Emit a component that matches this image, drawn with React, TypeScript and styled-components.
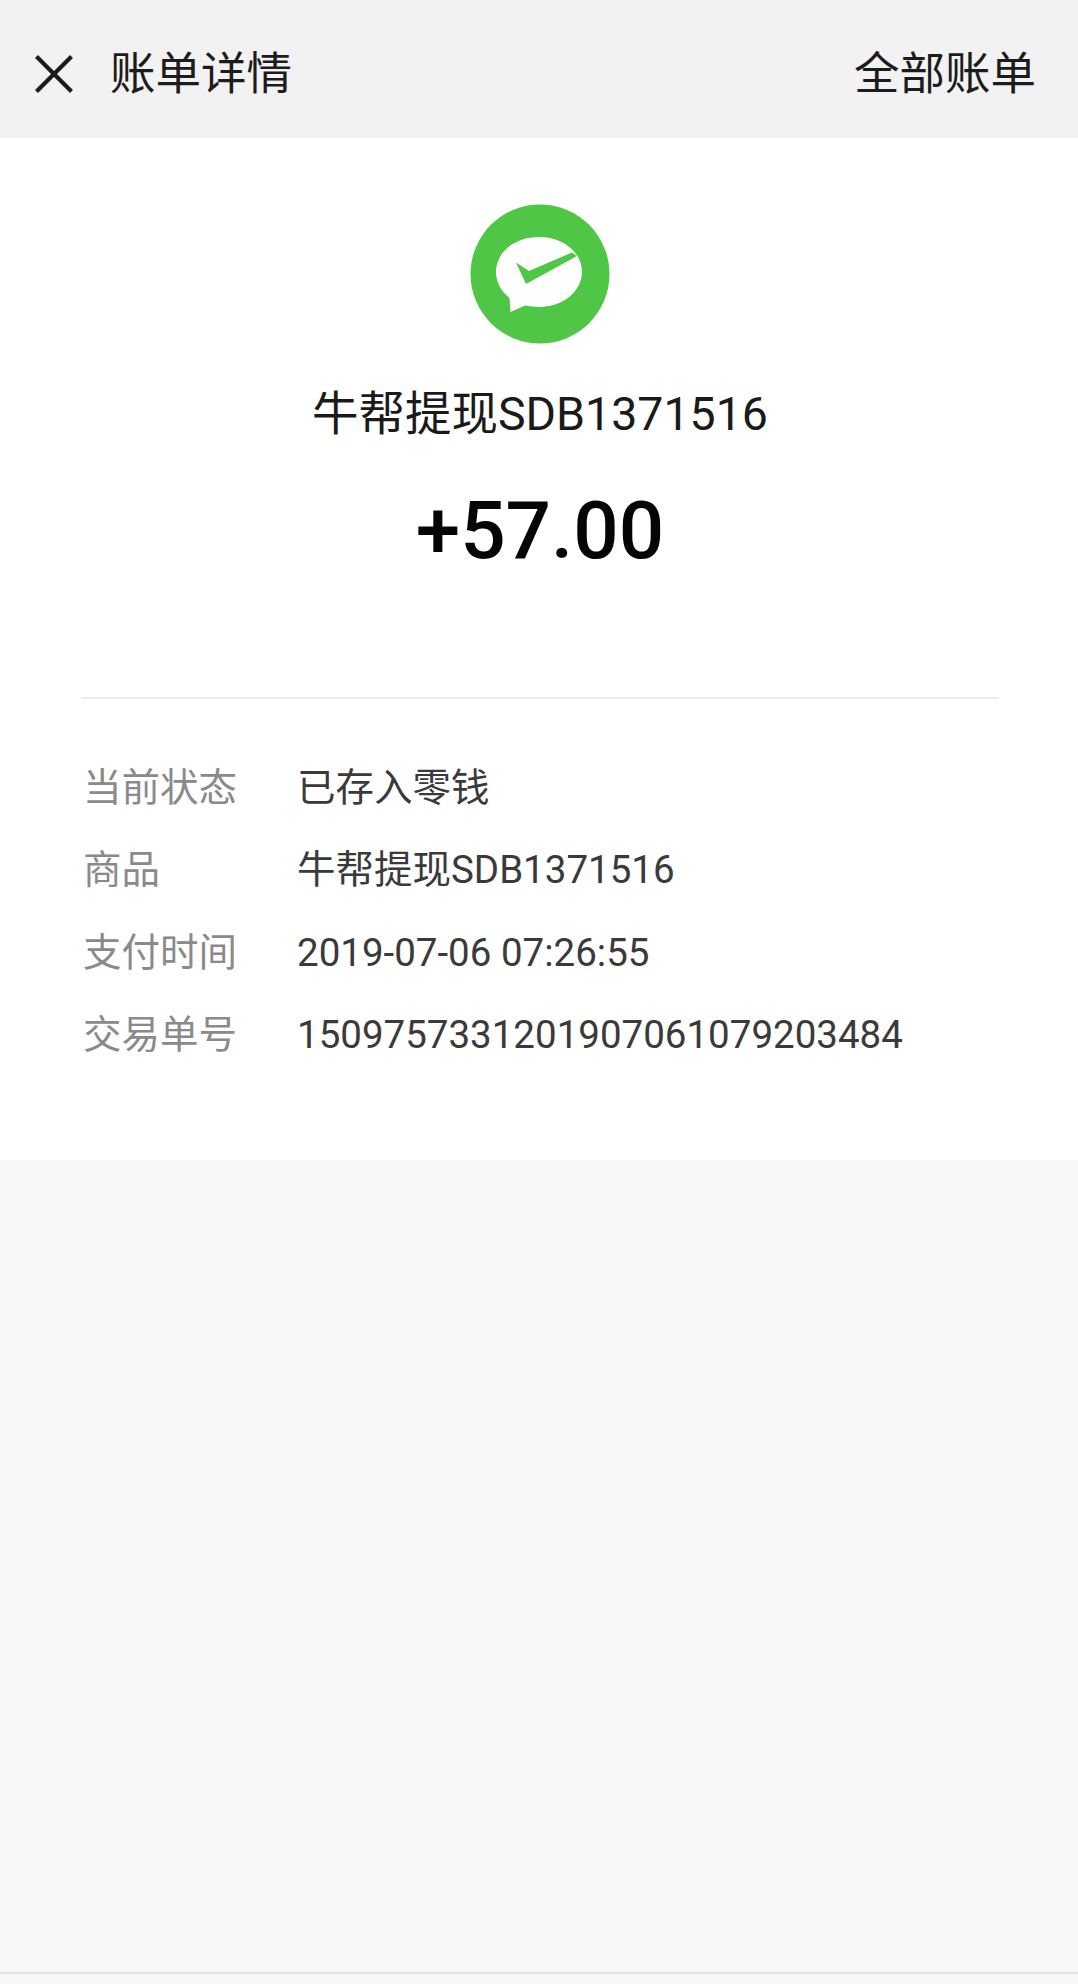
import React from "react";
import styled, { createGlobalStyle } from "styled-components";

const GlobalStyle = createGlobalStyle`
  html, body {
    margin: 0;
    padding: 0;
    background: #f8f8f9;
  }
  body {
    font-family: Roboto, "Noto Sans CJK SC", sans-serif;
  }
`;

//  styled-components
// ----------------------------------------------
const Page = styled.div`
  display: flex;
  flex-direction: column;
  height: 1984px;
  overflow: hidden;
  background: #f8f8f9;
`;
const Header = styled.header`
  display: flex;
  align-items: center;
  justify-content: space-between;
  box-sizing: border-box;
  height: 138px;
  padding: 12px 42px 0 35px;
  background: #f2f2f2;
`;
const HeaderLeft = styled.div`
  display: flex;
  align-items: center;
  gap: 37px;
`;
const CloseBox = styled.svg`
  display: block;
  width: 38px;
  height: 38px;
  margin-top: -2px;
`;
const HeaderText = styled.span`
  font-size: 45.5px;
  line-height: 60px;
  color: #1c1c1c;
`;
const Panel = styled.section`
  box-sizing: border-box;
  height: 1022px;
  padding-top: 66px;
  background: #fff;
`;
const Summary = styled.div`
  display: flex;
  flex-direction: column;
  align-items: center;
  margin: 0 80px 0 82px;
  height: 493px;
  border-bottom: 2px solid #ececec;
`;
const Logo = styled.svg`
  display: block;
  width: 140px;
  height: 140px;
`;
const Title = styled.div`
  margin-top: 40px;
  font-size: 46.5px;
  line-height: 60px;
  color: #1a1a1a;
`;
const Amount = styled.div`
  margin-top: 39px;
  font-size: 80px;
  line-height: 96px;
  font-weight: 500;
  color: #050505;
`;
const Details = styled.div`
  display: flex;
  flex-direction: column;
  gap: 22.3px;
  padding: 59px 0 0 83px;
`;
const Row = styled.div`
  display: flex;
  font-size: 38.5px;
  line-height: 60px;
`;
const Label = styled.span`
  width: 214px;
  flex-shrink: 0;
  color: #8a8a8a;
`;
const Value = styled.span`
  color: #3a3a3a;
`;
const BottomLine = styled.div`
  margin-top: 812px;
  height: 2px;
  background: #e2e2e2;
`;
// ----------------------------------------------

const rows = [
  { label: "当前状态", value: "已存入零钱" },
  { label: "商品", value: "牛帮提现SDB1371516" },
  { label: "支付时间", value: "2019-07-06 07:26:55" },
  { label: "交易单号", value: "1509757331201907061079203484" },
];

const CloseIcon = () => (
  <CloseBox viewBox="0 0 38 38" fill="none">
    <path d="M1.5 1.5 L36.5 36.5 M36.5 1.5 L1.5 36.5" stroke="#1c1c1c" strokeWidth="4.2" />
  </CloseBox>
);

const PayLogo = () => (
  <Logo viewBox="0 0 140 140">
    <circle cx="70" cy="70" r="69.5" fill="#4fc646" />
    <path
      d="M69 33 C93 33 112 48 112 68 C112 87 93 103 69 103 C64 103 59 102 55 101.5 L40.5 108 L39.5 94 C31 87 26 78 26 68 C26 48 45 33 69 33 Z"
      fill="#fff"
    />
    <path d="M46 58.5 L59 67 L102 48.5 L107 52 L56 80 Z" fill="#4fc646" />
  </Logo>
);

const App = () => {
  return (
    <Page>
      <GlobalStyle />
      <Header>
        <HeaderLeft>
          <CloseIcon />
          <HeaderText>账单详情</HeaderText>
        </HeaderLeft>
        <HeaderText>全部账单</HeaderText>
      </Header>
      <Panel>
        <Summary>
          <PayLogo />
          <Title>牛帮提现SDB1371516</Title>
          <Amount>+57.00</Amount>
        </Summary>
        <Details>
          {rows.map((row) => (
            <Row key={row.label}>
              <Label>{row.label}</Label>
              <Value>{row.value}</Value>
            </Row>
          ))}
        </Details>
      </Panel>
      <BottomLine />
    </Page>
  );
};

export default App;
